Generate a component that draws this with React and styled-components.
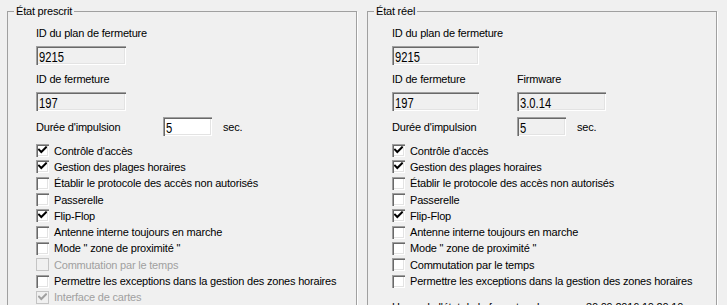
import React from 'react';
import styled, { createGlobalStyle } from 'styled-components';

const Global = createGlobalStyle`
  html, body { margin: 0; padding: 0; background: #f0f0f0; overflow: hidden; }
  body {
    font-family: "Liberation Sans", Arial, sans-serif;
    font-size: 11px;
    letter-spacing: -0.2px;
    color: #000;
  }
`;

const Page = styled.div`
  display: flex;
  gap: 10px;
  padding: 4px 0 0 7px;
  height: 305px;
  box-sizing: border-box;
`;

const Group = styled.fieldset`
  margin: 0;
  padding: 0;
  width: 350px;
  height: 360px;
  box-sizing: border-box;
  min-width: 0;
  border: 1px solid #a0a0a0;
  box-shadow: 1px 1px 0 #fff;
`;

const Legend = styled.legend`
  margin-left: 6px;
  padding: 0 2px;
  line-height: 14px;
  font-size: 11px;
`;

const Body = styled.div`
  padding: 2px 0 0 ${p => p.$pad}px;
  display: flex;
  flex-direction: column;
`;

const FieldGrid = styled.div`
  display: grid;
  grid-template-columns: ${p => p.$col}px auto;
  grid-template-rows: 26px 19px 27px 19px;
  align-items: center;
`;

const Label = styled.div`
  white-space: nowrap;
`;

const TextBox = styled.div`
  width: ${p => p.$w}px;
  height: 19px;
  box-sizing: border-box;
  padding: 3px 0 0 3px;
  line-height: 16px;
  font-size: 14px;
  letter-spacing: 0;
  white-space: nowrap;
  overflow: hidden;
  background: ${p => (p.$editable ? '#fff' : '#f0f0f0')};
  box-shadow: inset 1px 1px 0 #a0a0a0, inset 2px 2px 0 #696969,
    inset -1px -1px 0 #fff, inset -2px -2px 0 #e3e3e3;
  align-self: start;
`;

const Narrow = styled.span`
  display: inline-block;
  transform: scaleX(0.8);
  transform-origin: left center;
`;

const ImpulseRow = styled.div`
  display: flex;
  align-items: center;
  height: 19px;
  margin-top: 6px;
`;

const ImpulseLabel = styled.div`
  width: ${p => p.$col}px;
  white-space: nowrap;
`;

const Unit = styled.div`
  margin-left: 11px;
`;

const CheckList = styled.div`
  margin-top: 6.5px;
  display: flex;
  flex-direction: column;
`;

const CheckRow = styled.div`
  display: flex;
  align-items: center;
  height: 16.3px;
  white-space: nowrap;
  color: ${p => (p.$disabled ? '#a0a0a0' : '#000')};
`;

const Box = styled.div`
  width: 13px;
  height: 13px;
  box-sizing: border-box;
  flex: none;
  background: ${p => (p.$disabled ? '#f0f0f0' : '#fff')};
  box-shadow: ${p =>
    p.$disabled
      ? 'inset 0 0 0 1px #c4c4c4'
      : 'inset 1px 1px 0 #a0a0a0, inset 2px 2px 0 #696969, inset -1px -1px 0 #fff, inset -2px -2px 0 #e3e3e3'};
  margin-right: 5px;
  display: flex;
  align-items: center;
  justify-content: center;
`;

const StatusLine = styled.div`
  margin-top: 10px;
  height: 16px;
  line-height: 16px;
  white-space: nowrap;
  display: flex;
`;

const StatusValue = styled.span`
  margin-left: auto;
  width: 130px;
`;

function Field({ w, editable, children }) {
  return (
    <TextBox $w={w} $editable={editable}>
      <Narrow>{children}</Narrow>
    </TextBox>
  );
}

function Check({ checked, disabled, children }) {
  return (
    <CheckRow $disabled={disabled}>
      <Box $disabled={disabled}>
        {checked && (
          <svg width="9" height="9" viewBox="0 0 9 9">
            <path
              d="M1 3.6 L3.3 6 L8 1.3"
              fill="none"
              stroke={disabled ? '#a0a0a0' : '#000'}
              strokeWidth="2"
              strokeLinecap="square"
            />
          </svg>
        )}
      </Box>
      {children}
    </CheckRow>
  );
}

const leftChecks = [
  ["Contrôle d'accès", true],
  ['Gestion des plages horaires', true],
  ['Établir le protocole des accès non autorisés', false],
  ['Passerelle', false],
  ['Flip-Flop', true],
  ['Antenne interne toujours en marche', false],
  ['Mode " zone de proximité "', false],
  ['Commutation par le temps', false, true],
  ['Permettre les exceptions dans la gestion des zones horaires', false],
  ['Interface de cartes', true, true],
];

const rightChecks = [
  ["Contrôle d'accès", true],
  ['Gestion des plages horaires', true],
  ['Établir le protocole des accès non autorisés', false],
  ['Passerelle', false],
  ['Flip-Flop', true],
  ['Antenne interne toujours en marche', false],
  ['Mode " zone de proximité "', false],
  ['Commutation par le temps', false],
  ['Permettre les exceptions dans la gestion des zones horaires', false],
];

export default function App() {
  return (
    <>
      <Global />
      <Page>
        <Group>
          <Legend>État prescrit</Legend>
          <Body $pad={28}>
            <FieldGrid $col={127}>
              <Label>ID du plan de fermeture</Label>
              <div />
              <Field w={90}>9215</Field>
              <div />
              <Label>ID de fermeture</Label>
              <div />
              <Field w={90}>197</Field>
              <div />
            </FieldGrid>
            <ImpulseRow>
              <ImpulseLabel $col={127}>Durée d'impulsion</ImpulseLabel>
              <Field w={49} editable>5</Field>
              <Unit>sec.</Unit>
            </ImpulseRow>
            <CheckList>
              {leftChecks.map(([t, c, d]) => (
                <Check key={t} checked={c} disabled={d}>{t}</Check>
              ))}
            </CheckList>
          </Body>
        </Group>
        <Group>
          <Legend>État réel</Legend>
          <Body $pad={24}>
            <FieldGrid $col={125}>
              <Label>ID du plan de fermeture</Label>
              <div />
              <Field w={87}>9215</Field>
              <div />
              <Label>ID de fermeture</Label>
              <Label>Firmware</Label>
              <Field w={87}>197</Field>
              <Field w={89}>3.0.14</Field>
            </FieldGrid>
            <ImpulseRow>
              <ImpulseLabel $col={125}>Durée d'impulsion</ImpulseLabel>
              <Field w={49}>5</Field>
              <Unit>sec.</Unit>
            </ImpulseRow>
            <CheckList>
              {rightChecks.map(([t, c, d]) => (
                <Check key={t} checked={c} disabled={d}>{t}</Check>
              ))}
            </CheckList>
            <StatusLine>
              <span>Heure de l'état de la fermeture lue :</span>
              <StatusValue>30.09.2016 10:20:10</StatusValue>
            </StatusLine>
          </Body>
        </Group>
      </Page>
    </>
  );
}
